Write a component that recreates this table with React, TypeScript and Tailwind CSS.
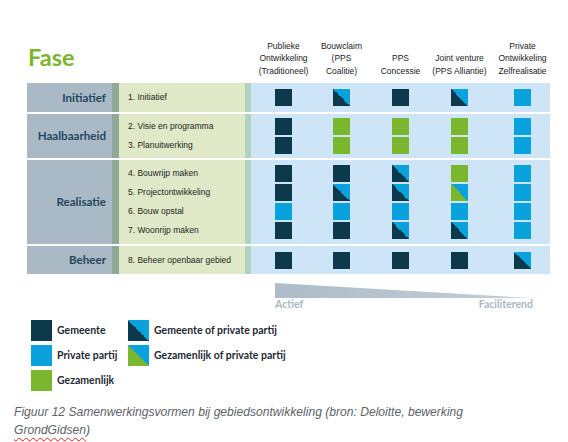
type Cell = "D" | "B" | "G" | "DB" | "GB";

// one square per samenwerkingsvorm, rows follow the phase steps
const groups: { phase: string; h: string; rows: { label: string; cells: Cell[] }[] }[] = [
  { phase: "Initiatief", h: "h-[29px]", rows: [{ label: "1. Initiatief", cells: ["D", "DB", "D", "DB", "B"] }] },
  {
    phase: "Haalbaarheid",
    h: "h-[44px]",
    rows: [
      { label: "2. Visie en programma", cells: ["D", "G", "G", "G", "B"] },
      { label: "3. Planuitwerking", cells: ["D", "G", "G", "G", "B"] },
    ],
  },
  {
    phase: "Realisatie",
    h: "h-[84px]",
    rows: [
      { label: "4. Bouwrijp maken", cells: ["D", "D", "DB", "G", "B"] },
      { label: "5. Projectontwikkeling", cells: ["D", "DB", "DB", "GB", "B"] },
      { label: "6. Bouw opstal", cells: ["B", "B", "B", "B", "B"] },
      { label: "7. Woonrijp maken", cells: ["D", "D", "DB", "DB", "B"] },
    ],
  },
  { phase: "Beheer", h: "h-[28px]", rows: [{ label: "8. Beheer openbaar gebied", cells: ["D", "D", "D", "D", "DB"] }] },
];

const headers = [
  ["Publieke", "Ontwikkeling", "(Traditioneel)"],
  ["Bouwclaim", "(PPS", "Coalitie)"],
  ["PPS", "Concessie"],
  ["Joint venture", "(PPS Alliantie)"],
  ["Private", "Ontwikkeling", "Zelfrealisatie"],
];

const colGap = ["ml-[24px]", "ml-[41px]", "ml-[42px]", "ml-[42px]", "ml-[46px]"];

const cellBg: Record<Cell, string> = {
  D: "bg-[#0c3a4c]",
  B: "bg-[#0aa2dc]",
  G: "bg-[#7ab62e]",
  DB: "bg-[linear-gradient(to_top_right,#0c3a4c_50%,#0aa2dc_50%)]",
  GB: "bg-[linear-gradient(to_top_right,#7ab62e_50%,#0aa2dc_50%)]",
};

const Square = ({ c, size = "size-[17px]" }: { c: Cell; size?: string }) => (
  <div className={`${size} ${cellBg[c]}`} />
);

const legend: { c: Cell; text: string }[][] = [
  [
    { c: "D", text: "Gemeente" },
    { c: "B", text: "Private partij" },
    { c: "G", text: "Gezamenlijk" },
  ],
  [
    { c: "DB", text: "Gemeente of private partij" },
    { c: "GB", text: "Gezamenlijk of private partij" },
  ],
];

export default function App() {
  return (
    <div className="w-[568px] h-[442px] bg-white overflow-hidden pt-[37px] font-['Liberation_Sans',Arial,sans-serif]">
      {/* header */}
      <div className="flex h-[40px] pl-[27px] mb-[6px]">
        <div className="w-[224px] self-center pt-[4px]">
          <span className="pl-[1px] text-[23.5px] font-bold leading-none text-[#7ab62e] font-['Lato',sans-serif]">
            Fase
          </span>
        </div>
        <div className="flex items-end">
          {headers.map((lines, i) => (
            <div key={i} className={`${colGap[i]} w-[17px] flex justify-center`}>
              <div className="whitespace-nowrap text-center text-[8.5px] leading-[12.5px] text-[#1b1b1b]">
                {lines.map((l) => (
                  <div key={l}>{l}</div>
                ))}
              </div>
            </div>
          ))}
        </div>
      </div>

      {/* table */}
      <div className="ml-[27px] w-[523px] flex flex-col gap-[2px]">
        {groups.map((g) => (
          <div key={g.phase} className={`flex ${g.h}`}>
            <div className="w-[85px] bg-[#a9b9c6] flex items-center justify-end pr-[6px]">
              <span className="text-[11.6px] font-bold text-[#24475d] font-['Lato',sans-serif]">{g.phase}</span>
            </div>
            <div className="w-[7px] bg-[#8fa99b]" />
            <div className="w-[126px] bg-[#dfe9c7] flex flex-col justify-center gap-[2px] pl-[9px]">
              {g.rows.map((r) => (
                <div key={r.label} className="h-[17px] flex items-center text-[8.5px] text-[#1e1e1e]">
                  {r.label}
                </div>
              ))}
            </div>
            <div className="w-[6px] bg-[#b1d1c1]" />
            <div className="flex-1 bg-[#cde5f6] flex flex-col justify-center gap-[2px]">
              {g.rows.map((r) => (
                <div key={r.label} className="flex">
                  {r.cells.map((c, i) => (
                    <div key={i} className={colGap[i]}>
                      <Square c={c} />
                    </div>
                  ))}
                </div>
              ))}
            </div>
          </div>
        ))}
      </div>

      {/* actief -> faciliterend */}
      <div className="ml-[275px] w-[258px] mt-[9px]">
        <svg width="256" height="15" viewBox="0 0 256 15" className="block">
          <defs>
            <linearGradient id="fade" x1="0" x2="1" y1="0" y2="0">
              <stop offset="0" stopColor="#adbcc8" />
              <stop offset="1" stopColor="#c3ced7" />
            </linearGradient>
          </defs>
          <polygon points="0,0 256,15 0,15" fill="url(#fade)" />
        </svg>
        <div className="flex justify-between text-[10.5px] font-bold text-[#aab7c2] font-['Lato',sans-serif] leading-[13px]">
          <span>Actief</span>
          <span>Faciliterend</span>
        </div>
      </div>

      {/* legend */}
      <div className="flex ml-[31px] mt-[9px]">
        {legend.map((col, ci) => (
          <div key={ci} className={`flex flex-col gap-[4px] ${ci === 0 ? "w-[97px]" : ""}`}>
            {col.map((l) => (
              <div key={l.text} className="flex items-center h-[21px]">
                <Square c={l.c} size="size-[21px]" />
                <span className="ml-[5px] text-[10.5px] font-bold text-[#1f2a32] font-['Lato',sans-serif]">{l.text}</span>
              </div>
            ))}
          </div>
        ))}
      </div>

      {/* caption */}
      <div className="ml-[14px] mt-[12px] w-[490px] italic text-[12.1px] leading-[18px] text-[#5d6269]">
        Figuur 12 Samenwerkingsvormen bij gebiedsontwikkeling (bron: Deloitte, bewerking{" "}
        <span className="underline decoration-wavy decoration-[#e02020] decoration-[1px] underline-offset-[3px]">
          GrondGidsen
        </span>
        )
      </div>
    </div>
  );
}
